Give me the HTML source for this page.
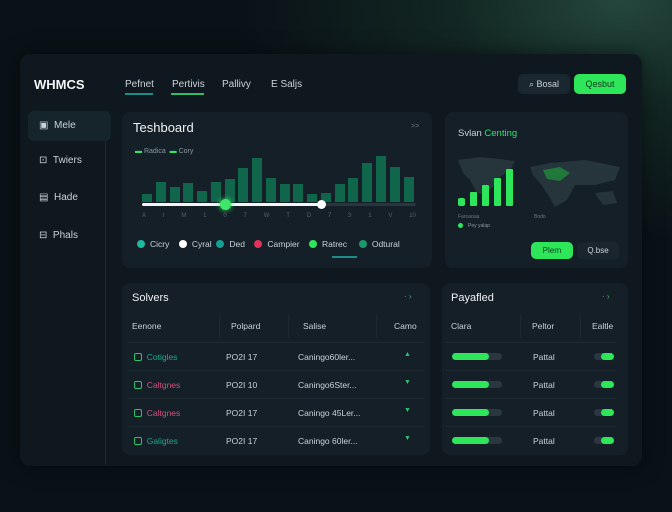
<!DOCTYPE html>
<html><head><meta charset="utf-8"><style>
*{margin:0;padding:0;box-sizing:border-box}
body{width:672px;height:512px;overflow:hidden;font-family:"Liberation Sans",sans-serif;color:#c9d3d8;background:radial-gradient(ellipse 380px 240px at 620px 0px,#24473d 0%,#122622 45%,#0a1217 100%);position:relative;font-size:9px}
.abs{position:absolute}
.panel{left:20px;top:54px;width:622px;height:412px;background:#0f181f;border-radius:10px;box-shadow:0 0 20px rgba(0,0,0,.5)}
.card{background:#141f27;border-radius:8px}
.green{color:#2ee66a}
.bar{position:absolute;bottom:0;width:10px;background:#10664a}
.dot{display:inline-block;width:8px;height:8px;border-radius:50%;vertical-align:-1px;margin-right:5px}
.row{position:absolute;left:0;right:0;height:28px;border-top:1px solid #1d2a32}
.pb{position:absolute;width:50px;height:7px;background:#2a3640;border-radius:4px}
.pb i{position:absolute;left:0;top:0;height:7px;width:37px;background:#2ee65a;border-radius:4px}
.tg{position:absolute;width:20px;height:7px;background:#2a3640;border-radius:4px}
.tg i{position:absolute;right:0;top:0;height:7px;width:13px;background:#2ee65a;border-radius:4px}
.ic{display:inline-block;width:8px;height:8px;border:1.3px solid #2ec46a;border-radius:2px;vertical-align:-1px}
</style></head><body>
<div class="abs panel"></div>
<div class="abs" style="left:34px;top:77px;font-weight:bold;font-size:13px;color:#f2f5f6">WHMCS</div>
<div class="abs" style="left:125px;top:79px;font-size:10px">Pefnet</div>
<div class="abs" style="left:125px;top:93px;width:28px;height:2px;background:#1f8a8a"></div>
<div class="abs" style="left:172px;top:79px;font-size:10px">Pertivis</div>
<div class="abs" style="left:171px;top:93px;width:33px;height:2px;background:#2ebd6a"></div>
<div class="abs" style="left:222px;top:79px;font-size:10px">Pallivy</div>
<div class="abs" style="left:271px;top:79px;font-size:10px">E Saljs</div>
<div class="abs" style="left:518px;top:74px;width:52px;height:20px;background:#1a2730;border-radius:5px;font-size:9px;line-height:20px;text-align:center">⌕ Bosal</div>
<div class="abs" style="left:574px;top:74px;width:52px;height:20px;background:#2ee65a;border-radius:5px;font-size:9px;line-height:20px;text-align:center;color:#0d3a1c">Qesbut</div>

<div class="abs" style="left:28px;top:111px;width:83px;height:30px;background:#16252c;border-radius:6px"></div>
<div class="abs" style="left:105px;top:140px;width:1px;height:325px;background:#1c2830"></div>
<div class="abs" style="left:39px;top:120px;font-size:10px">▣&nbsp;&nbsp;Mele</div>
<div class="abs" style="left:39px;top:155px;font-size:10px">⊡&nbsp;&nbsp;Twiers</div>
<div class="abs" style="left:39px;top:192px;font-size:10px">▤&nbsp;&nbsp;Hade</div>
<div class="abs" style="left:39px;top:230px;font-size:10px">⊟&nbsp;&nbsp;Phals</div>

<div class="abs card" style="left:122px;top:112px;width:310px;height:156px"></div>
<div class="abs" style="left:133px;top:120px;font-size:13px;color:#eef2f3">Teshboard</div>
<div class="abs" style="left:411px;top:123px;font-size:7px;color:#6b7a82">&gt;&gt;</div>
<div class="abs" style="left:135px;top:148px;font-size:7px;color:#8a9aa2"><span class="green">▬</span> Radica &nbsp;<span class="green">▬</span> Cory</div>
<div class="abs" style="left:142px;top:152px;width:276px;height:50px">
<div class="bar" style="left:0;height:8px"></div><div class="bar" style="left:14px;height:20px"></div><div class="bar" style="left:28px;height:15px"></div><div class="bar" style="left:41px;height:19px"></div><div class="bar" style="left:55px;height:11px"></div><div class="bar" style="left:69px;height:20px"></div><div class="bar" style="left:83px;height:23px"></div><div class="bar" style="left:96px;height:34px"></div><div class="bar" style="left:110px;height:44px"></div><div class="bar" style="left:124px;height:24px"></div><div class="bar" style="left:138px;height:18px"></div><div class="bar" style="left:151px;height:18px"></div><div class="bar" style="left:165px;height:8px"></div><div class="bar" style="left:179px;height:9px"></div><div class="bar" style="left:193px;height:18px"></div><div class="bar" style="left:206px;height:24px"></div><div class="bar" style="left:220px;height:39px"></div><div class="bar" style="left:234px;height:46px"></div><div class="bar" style="left:248px;height:35px"></div><div class="bar" style="left:262px;height:25px"></div>
</div>
<div class="abs" style="left:142px;top:203px;width:274px;height:3px;background:#2a363e;border-radius:2px"></div>
<div class="abs" style="left:142px;top:203px;width:180px;height:3px;background:#f2f4f5;border-radius:2px"></div>
<div class="abs" style="left:220px;top:199px;width:11px;height:11px;border-radius:50%;background:#3ee66a;box-shadow:0 0 6px #3ee66a"></div>
<div class="abs" style="left:317px;top:200px;width:9px;height:9px;border-radius:50%;background:#fff"></div>
<div class="abs" style="left:142px;top:213px;width:274px;font-size:6px;color:#56646c;display:flex;justify-content:space-between"><span>A</span><span>I</span><span>M</span><span>1</span><span>0</span><span>7</span><span>W</span><span>T</span><span>D</span><span>7</span><span>3</span><span>1</span><span>V</span><span>10</span></div>
<div class="abs" style="left:137px;top:239px;font-size:8.5px;white-space:nowrap"><span class="dot" style="background:#1fb8a0"></span>Cicry &nbsp;&nbsp;&nbsp;<span class="dot" style="background:#fff"></span>Cyral &nbsp;<span class="dot" style="background:#14a090"></span>Ded &nbsp;&nbsp;&nbsp;<span class="dot" style="background:#e0335a"></span>Campier &nbsp;&nbsp;&nbsp;<span class="dot" style="background:#2ee65a"></span>Ratrec &nbsp;&nbsp;&nbsp;&nbsp;<span class="dot" style="background:#1a9a6a"></span>Odtural</div>
<div class="abs" style="left:332px;top:256px;width:25px;height:2px;background:#1f8a8a"></div>

<div class="abs card" style="left:445px;top:112px;width:183px;height:156px"></div>
<div class="abs" style="left:458px;top:128px;font-size:9.5px">Svlan <span class="green">Centing</span></div>
<svg class="abs" style="left:455px;top:155px" width="170" height="60" viewBox="0 0 170 60">
<path d="M3 5 L25 2 L45 4 L60 6 L55 15 L45 22 L38 32 L30 40 L22 38 L15 25 L8 18 Z" fill="#2a3a42" opacity=".8"/>
<path d="M75 12 L95 8 L130 5 L165 12 L160 25 L140 30 L120 30 L112 45 L100 52 L93 40 L85 28 L78 20 Z" fill="#2a3a42" opacity=".8"/>
<path d="M140 38 L158 36 L162 48 L148 50 Z" fill="#2a3a42" opacity=".8"/>
<path d="M88 15 L105 12 L115 18 L105 26 L92 24 Z" fill="#1f8a3a" opacity=".8"/>
<rect x="3" y="43" width="7" height="8" rx="2" fill="#2ee65a"/><rect x="15" y="37" width="7" height="14" rx="1" fill="#2ee65a"/><rect x="27" y="30" width="7" height="21" rx="1" fill="#2ee65a"/><rect x="39" y="23" width="7" height="28" rx="1" fill="#2ee65a"/><rect x="51" y="14" width="7" height="37" rx="1" fill="#2ee65a"/>
</svg>
<div class="abs" style="left:458px;top:214px;font-size:5px;color:#6b7a82">Faroaoaa</div>
<div class="abs" style="left:458px;top:223px;font-size:5px;color:#8a9aa2"><span class="dot" style="background:#2ee65a;width:5px;height:5px"></span>Pey yalap</div>
<div class="abs" style="left:534px;top:214px;font-size:5px;color:#6b7a82">Bodo</div>
<div class="abs" style="left:531px;top:242px;width:42px;height:17px;background:#2ee65a;border-radius:5px;font-size:8px;line-height:17px;text-align:center;color:#0d3a1c">Plern</div>
<div class="abs" style="left:577px;top:242px;width:42px;height:17px;background:#1a262e;border-radius:5px;font-size:8px;line-height:17px;text-align:center">Q.bse</div>

<div class="abs card" style="left:122px;top:283px;width:308px;height:172px">
<div class="abs" style="left:10px;top:9px;font-size:11px;color:#eef2f3">Solvers</div>
<div class="abs" style="left:282px;top:9px;font-size:8px;color:#2ebd6a">· ›</div>
<div class="abs" style="left:10px;top:38px;font-size:8.5px">Eenone</div>
<div class="abs" style="left:97px;top:32px;width:1px;height:22px;background:#1d2a32"></div>
<div class="abs" style="left:109px;top:38px;font-size:8.5px">Polpard</div>
<div class="abs" style="left:166px;top:32px;width:1px;height:22px;background:#1d2a32"></div>
<div class="abs" style="left:181px;top:38px;font-size:8.5px">Salise</div>
<div class="abs" style="left:254px;top:32px;width:1px;height:22px;background:#1d2a32"></div>
<div class="abs" style="left:272px;top:38px;font-size:8.5px">Camo</div>
<div class="abs" style="left:6px;right:6px;top:59px;height:112px">
<div class="row" style="top:0"><span class="abs" style="left:6px;top:9px;font-size:8.5px;color:#1fa890"><span class="ic"></span>&nbsp; Cotigles</span><span class="abs" style="left:98px;top:9px;font-size:8.5px">PO2I 17</span><span class="abs" style="left:170px;top:9px;font-size:8.5px">Caningo60ler...</span><span class="abs" style="left:276px;top:8px;font-size:7px;color:#2ebd6a">▲</span></div>
<div class="row" style="top:28px"><span class="abs" style="left:6px;top:9px;font-size:8.5px;color:#d0507e"><span class="ic"></span>&nbsp; Caltgnes</span><span class="abs" style="left:98px;top:9px;font-size:8.5px">PO2I 10</span><span class="abs" style="left:170px;top:9px;font-size:8.5px">Caningo6Ster...</span><span class="abs" style="left:276px;top:8px;font-size:7px;color:#2ebd6a">▼</span></div>
<div class="row" style="top:56px"><span class="abs" style="left:6px;top:9px;font-size:8.5px;color:#d0507e"><span class="ic"></span>&nbsp; Caltgnes</span><span class="abs" style="left:98px;top:9px;font-size:8.5px">PO2I 17</span><span class="abs" style="left:170px;top:9px;font-size:8.5px">Caningo 45Ler...</span><span class="abs" style="left:276px;top:8px;font-size:7px;color:#2ebd6a">▼</span></div>
<div class="row" style="top:84px"><span class="abs" style="left:6px;top:9px;font-size:8.5px;color:#1fa890"><span class="ic"></span>&nbsp; Galigtes</span><span class="abs" style="left:98px;top:9px;font-size:8.5px">PO2I 17</span><span class="abs" style="left:170px;top:9px;font-size:8.5px">Caningo 60ler...</span><span class="abs" style="left:276px;top:8px;font-size:7px;color:#2ebd6a">▼</span></div>
</div></div>

<div class="abs card" style="left:442px;top:283px;width:186px;height:172px">
<div class="abs" style="left:9px;top:9px;font-size:11px;color:#eef2f3">Payafled</div>
<div class="abs" style="left:160px;top:9px;font-size:8px;color:#2ebd6a">· ›</div>
<div class="abs" style="left:9px;top:38px;font-size:8.5px">Clara</div>
<div class="abs" style="left:78px;top:32px;width:1px;height:22px;background:#1d2a32"></div>
<div class="abs" style="left:90px;top:38px;font-size:8.5px">Peltor</div>
<div class="abs" style="left:138px;top:32px;width:1px;height:22px;background:#1d2a32"></div>
<div class="abs" style="left:150px;top:38px;font-size:8.5px">Ealtle</div>
<div class="abs" style="left:4px;right:12px;top:59px;height:112px">
<div class="row" style="top:0"><div class="pb" style="left:6px;top:10px"><i></i></div><span class="abs" style="left:87px;top:9px;font-size:8.5px">Pattal</span><div class="tg" style="left:148px;top:10px"><i></i></div></div>
<div class="row" style="top:28px"><div class="pb" style="left:6px;top:10px"><i></i></div><span class="abs" style="left:87px;top:9px;font-size:8.5px">Pattal</span><div class="tg" style="left:148px;top:10px"><i></i></div></div>
<div class="row" style="top:56px"><div class="pb" style="left:6px;top:10px"><i></i></div><span class="abs" style="left:87px;top:9px;font-size:8.5px">Pattal</span><div class="tg" style="left:148px;top:10px"><i></i></div></div>
<div class="row" style="top:84px"><div class="pb" style="left:6px;top:10px"><i></i></div><span class="abs" style="left:87px;top:9px;font-size:8.5px">Pattal</span><div class="tg" style="left:148px;top:10px"><i></i></div></div>
</div></div>
</body></html>
